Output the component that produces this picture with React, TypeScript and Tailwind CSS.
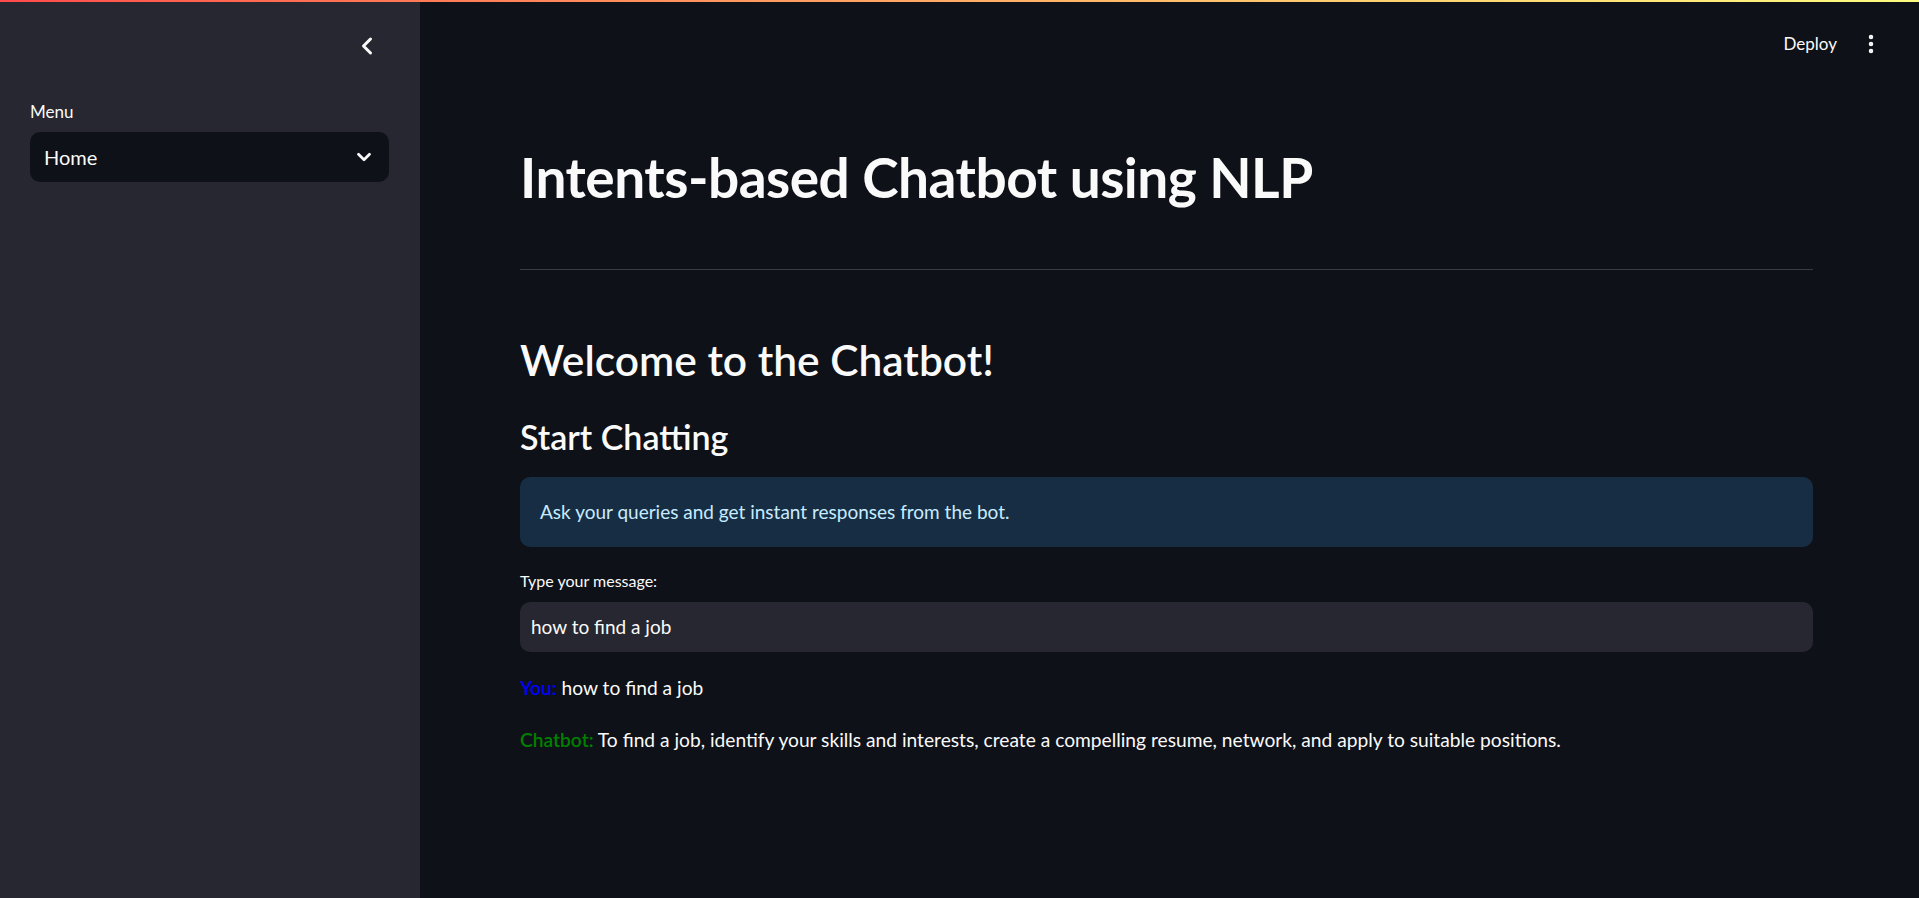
import { ChevronLeft, ChevronDown, EllipsisVertical } from "lucide-react";

const font = { fontFamily: "Lato, 'Noto Sans', sans-serif" };

function Sidebar() {
  return (
    <aside className="w-[420px] shrink-0 bg-[#262730] text-[#fafafa]">
      <div className="h-[88px] flex items-center justify-end pr-[39px]">
        <ChevronLeft size={28} strokeWidth={2.6} />
      </div>
      <div className="px-[30px] pr-[31px]">
        <div className="mt-[10px] h-[24px] leading-[24px] text-[17px]">Menu</div>
        <div className="mt-[8px] h-[50px] rounded-[10px] bg-[#0e1117] flex items-center justify-between pl-[14px] pr-[14px]">
          <span className="text-[20px]">Home</span>
          <ChevronDown size={22} strokeWidth={3} />
        </div>
      </div>
    </aside>
  );
}

function Header() {
  return (
    <div className="h-[84px] flex items-center justify-end pr-[36px] gap-[22px] text-[#fafafa]">
      <span className="text-[17px]">Deploy</span>
      <EllipsisVertical size={24} strokeWidth={2.5} />
    </div>
  );
}

export default function App() {
  return (
    <div className="h-screen w-full flex flex-col bg-[#0e1117] overflow-hidden" style={font}>
      <div className="h-[2px] shrink-0 bg-gradient-to-r from-[#ff4b4b] to-[#fffd80]" />
      <div className="flex flex-1 min-h-0">
        <Sidebar />
        <main className="flex-1 flex flex-col text-[#fafafa]">
          <Header />
          <div className="pl-[100px] w-[1393px]">
            <h1 className="mt-[58px] h-[66px] leading-[66px] text-[55px] font-bold tracking-[-0.5px]">
              Intents-based Chatbot using NLP
            </h1>
            <hr className="mt-[59px] border-0 h-px bg-[#3a3c44]" />
            <h2 className="mt-[63px] h-[54px] leading-[54px] text-[42.5px] font-semibold">
              Welcome to the Chatbot!
            </h2>
            <h3 className="mt-[29px] h-[42px] leading-[42px] text-[34px] font-semibold">
              Start Chatting
            </h3>
            <div className="mt-[19px] h-[70px] rounded-[10px] bg-[#172d43] flex items-center px-[20px] text-[19px] text-[#c7ebff]">
              Ask your queries and get instant responses from the bot.
            </div>
            <div className="mt-[22px] h-[24px] leading-[24px] text-[16px]">Type your message:</div>
            <div className="mt-[9px] h-[50px] rounded-[10px] bg-[#262730] flex items-center px-[11px] text-[19px]">
              how to find a job
            </div>
            <p className="mt-[21px] h-[30px] leading-[30px] text-[19.2px]">
              <span className="text-[#0000ff] font-semibold">You:</span> how to find a job
            </p>
            <p className="mt-[22px] h-[30px] leading-[30px] text-[19.2px]">
              <span className="text-[#008000] font-semibold">Chatbot:</span> To find a job, identify your skills and interests, create a compelling resume, network, and apply to suitable positions.
            </p>
          </div>
        </main>
      </div>
    </div>
  );
}
